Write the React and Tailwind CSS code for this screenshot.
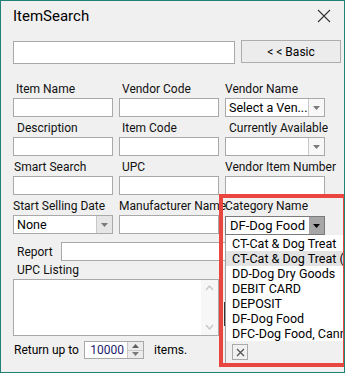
import React from 'react'

const font = { fontFamily: 'Roboto, "Noto Sans", sans-serif' }

function Arrow({ dark }) {
  return (
    <svg width="7" height="4" viewBox="0 0 7 4">
      <path d="M0 0 L7 0 L3.5 4 Z" fill={dark ? '#000' : '#7a7a7a'} />
    </svg>
  )
}

function TextBox() {
  return <div className="h-[19px] border border-[#a9a9a9] bg-white" />
}

function Select({ value, split = 'w-[16px]', btn = 'bg-white' }) {
  return (
    <div className="flex h-[19px] border border-[#a9a9a9] bg-white">
      <div className="flex-1 pl-[3px] text-[12.5px] leading-[17px] text-black whitespace-nowrap overflow-hidden">{value}</div>
      <div className={`${split} ${btn} flex items-center justify-center border-l border-[#c8c8c8]`}>
        <Arrow />
      </div>
    </div>
  )
}

function Field({ label, children, indent = 'pl-[3px]' }) {
  return (
    <div className="flex flex-col">
      <div className={`h-[16px] text-[12px] leading-[15px] text-[#111] whitespace-nowrap ${indent}`}>{label}</div>
      {children}
    </div>
  )
}

const items = [
  'CT-Cat & Dog Treat',
  'CT-Cat & Dog Treat (No Tax)',
  'DD-Dog Dry Goods',
  'DEBIT CARD',
  'DEPOSIT',
  'DF-Dog Food',
  'DFC-Dog Food, Canned',
]

export default function App() {
  return (
    <div className="w-[345px] h-[374px] bg-white" style={font}>
      <div className="relative w-[345px] h-[373px] overflow-hidden border border-[#1f8275] bg-[#f0f0f0]">
        {/* title bar */}
        <div className="flex items-center justify-between h-[30px] pl-[12px] pr-[12px]">
          <span className="text-[15px] text-black">ItemSearch</span>
          <svg width="14" height="14" viewBox="0 0 14 14" className="mr-[1px]">
            <path d="M1 1 L13 13 M13 1 L1 13" stroke="#333" strokeWidth="1.1" />
          </svg>
        </div>

        <div className="pl-[12px] pt-[9px]">
          {/* search row */}
          <div className="flex items-start gap-[6px]">
            <div className="w-[222px] h-[23px] mt-[1px] border border-[#a9a9a9] bg-white" />
            <div className="w-[100px] h-[23px] border border-[#adadad] bg-[#ececec] flex items-center justify-center text-[12px] text-black">
              &lt; &lt; Basic
            </div>
          </div>

          {/* field grid */}
          <div className="grid grid-cols-[100px_100px_100px] gap-x-[6px] gap-y-[4px] mt-[18px]">
            <Field label="Item Name"><TextBox /></Field>
            <Field label="Vendor Code"><TextBox /></Field>
            <Field label="Vendor Name" indent="pl-0"><Select value="Select a Ven..." btn="bg-[#f7f7f7]" /></Field>

            <Field label="Description" indent="pl-[4px]"><TextBox /></Field>
            <Field label="Item Code"><TextBox /></Field>
            <Field label="Currently Available" indent="pl-[4px]"><Select value="" btn="bg-[#f7f7f7]" /></Field>

            <Field label="Smart Search" indent="pl-[1px]"><TextBox /></Field>
            <Field label="UPC"><TextBox /></Field>
            <Field label="Vendor Item Number" indent="pl-0"><Select value="" split="hidden" /></Field>

            <Field label="Start Selling Date" indent="pl-0"><Select value="None" btn="bg-[#e6e6e6]" /></Field>
            <Field label="Manufacturer Name" indent="pl-0"><TextBox /></Field>
            <Field label="Category Name" indent="pl-0">
              <div className="flex h-[19px] mt-[1px] border border-[#7a7a7a] bg-white">
                <div className="flex-1 pl-[4px] text-[13px] leading-[17px] text-black whitespace-nowrap">DF-Dog Food</div>
                <div className="w-[15px] bg-[#a6a6a6] flex items-center justify-center">
                  <Arrow dark />
                </div>
              </div>
            </Field>
          </div>

          {/* report */}
          <div className="flex items-center mt-[7px]">
            <span className="w-[48px] pl-[4px] text-[12px] text-[#111]">Report</span>
            <div className="w-[170px] h-[19px] border border-[#a9a9a9] bg-white" />
          </div>

          <div className="mt-[1px] pl-[4px] h-[17px] text-[12px] leading-[16px] text-[#111]">UPC Listing</div>
          <div className="flex w-[206px] h-[57px] border border-[#a9a9a9] bg-white">
            <div className="flex-1" />
            <div className="w-[17px] bg-[#f7f7f7] flex flex-col items-center justify-between py-[5px]">
              <svg width="9" height="6" viewBox="0 0 9 6"><path d="M1 5 L4.5 1 L8 5" fill="none" stroke="#c5c5c5" strokeWidth="1.2" /></svg>
              <svg width="9" height="6" viewBox="0 0 9 6"><path d="M1 1 L4.5 5 L8 1" fill="none" stroke="#c5c5c5" strokeWidth="1.2" /></svg>
            </div>
          </div>

          {/* return up to */}
          <div className="flex items-center mt-[5px] text-[12px] text-black">
            <span className="w-[71px] pl-[1px]">Return up to</span>
            <div className="flex h-[18px] border border-[#a9a9a9] bg-white">
              <div className="w-[42px] pr-[3px] text-right leading-[16px] text-[#1a1a6e]">10000</div>
              <div className="w-[16px] flex flex-col border-l border-[#c8c8c8] bg-[#ececec]">
                <div className="flex-1 flex items-center justify-center border-b border-[#c8c8c8]">
                  <svg width="7" height="4" viewBox="0 0 7 4"><path d="M0 4 L7 4 L3.5 0 Z" fill="#606060" /></svg>
                </div>
                <div className="flex-1 flex items-center justify-center">
                  <Arrow />
                </div>
              </div>
            </div>
            <span className="ml-[10px]">items.</span>
          </div>
        </div>

        {/* open dropdown list */}
        <div className="absolute left-[224px] top-[234px] w-[130px] h-[128px] border-l border-[#a0a0a0] bg-[#f0f0f0] flex flex-col">
          <div className="bg-white h-[106px] pt-[1px]">
            {items.map((it, i) => (
              <div
                key={it}
                className={`h-[15px] pl-[6px] text-[12.5px] leading-[15px] text-black whitespace-nowrap ${i === 1 ? 'bg-[#e3e3e3]' : ''}`}
              >
                {it}
              </div>
            ))}
          </div>
          <div className="pl-[6px] pt-[3px]">
            <div className="w-[16px] h-[16px] border border-[#a9a9a9] bg-[#f0f0f0] flex items-center justify-center">
              <svg width="9" height="9" viewBox="0 0 9 9"><path d="M1 1 L8 8 M8 1 L1 8" stroke="#555" strokeWidth="1.3" /></svg>
            </div>
          </div>
        </div>
        <div className="absolute left-[223px] top-[301px] w-[1px] h-[24px] bg-[#333] pointer-events-none" />

        {/* red highlight */}
        <div className="absolute left-[218px] top-[193px] w-[128px] h-[173px] border-[4px] border-[#e8463f] pointer-events-none" />
      </div>
    </div>
  )
}
